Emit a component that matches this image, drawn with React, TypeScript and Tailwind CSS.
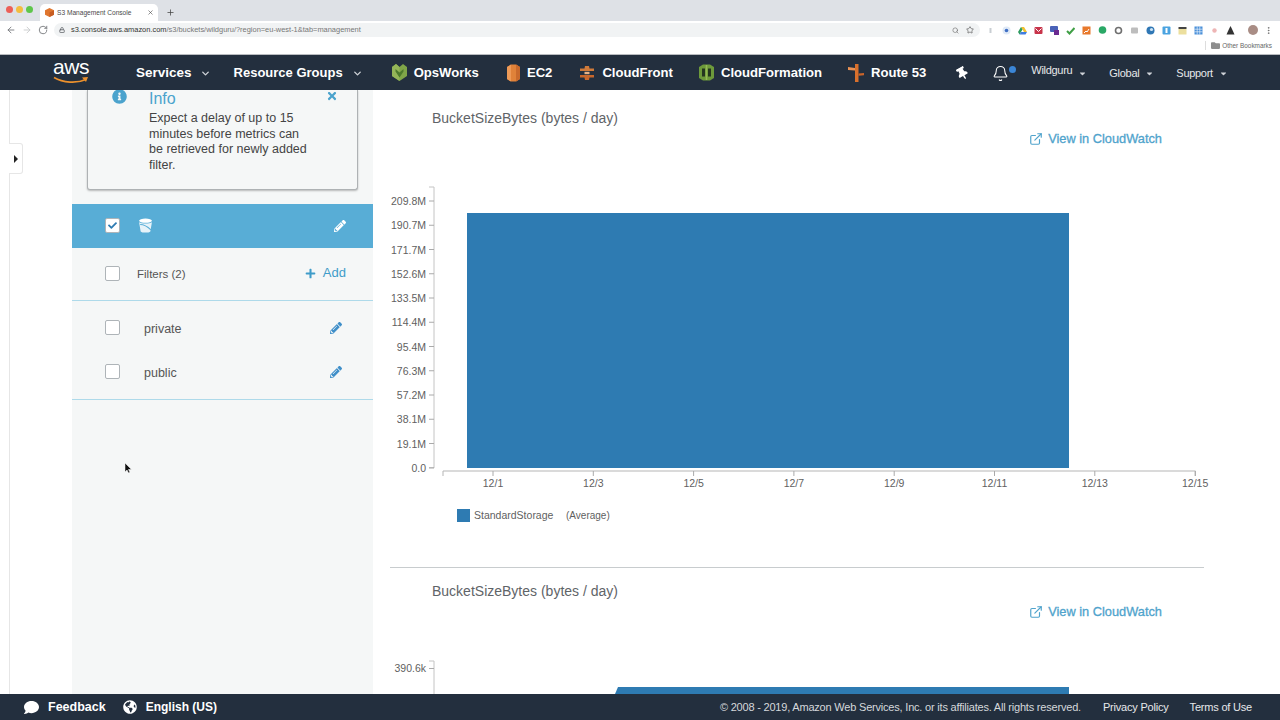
import { ArrowLeft, ArrowRight, ChevronDown, EllipsisVertical, ExternalLink, Lock, Plus, RotateCw, Search, Star, X, Bell } from "lucide-react";
import { FaCaretDown, FaCheck, FaComment, FaGlobeAmericas, FaInfoCircle, FaPencilAlt, FaPlus, FaThumbtack, FaTimes, FaFolder } from "react-icons/fa";

const font = "font-['Liberation_Sans',Arial,sans-serif]";

function Ops() {
  return (
    <svg width="15" height="17" viewBox="0 0 15 17" className="shrink-0">
      <path d="M4 0l3.500 3L11 0l4 3v9l-7.500 5L0 12V3z" fill="#7fa548" />
      <path d="M4 0l3.500 3v14L0 12V3z" fill="#94b558" />
      <path d="M3.500 5l4 3.500 4-3.500v2.500l-4 6-4-6z" fill="#4d7a2c" />
    </svg>
  );
}
function Ec2() {
  return (
    <svg width="15" height="18" viewBox="0 0 15 18" className="shrink-0">
      <path d="M5 .500 1 3v12l4 2.500h5l4-2.500V3L10 .500z" fill="#e08239" />
      <path d="M10 .500 14 3v12l-4 2.500z" fill="#c96a2c" />
      <path d="M5 .500 1 3v12l4 2.500z" fill="#ee9a57" />
    </svg>
  );
}
function Front() {
  return (
    <svg width="16" height="16" viewBox="0 0 16 16" className="shrink-0">
      <path d="M1 3.500h4.500L6 1h4l.5 2.500H15V6H1z" fill="#cf7a3a" />
      <rect x="5.500" y="6.800" width="5" height="2.400" fill="#eab183" />
      <path d="M1 10h14v2.500h-4.500L10 15H6l-.5-2.500H1z" fill="#c8672c" />
    </svg>
  );
}
function Form() {
  return (
    <svg width="15" height="17" viewBox="0 0 15 17" className="shrink-0">
      <path d="M4 .500h7L15 3v11l-4 2.500H4L0 14V3z" fill="#6d9a3b" />
      <path d="M3 4.500h3v8H3zM9 4.500h3v8H9z" fill="#24361f" />
      <rect x="6.700" y="1" width="1.600" height="15" fill="#94bb55" />
    </svg>
  );
}
function Route() {
  return (
    <svg width="16" height="18" viewBox="0 0 16 18" className="shrink-0">
      <path d="M7 0h3.500v18H7z" fill="#d9702c" />
      <path d="M0 3l7 1v2.500L0 6z" fill="#ea9254" />
      <path d="M10.500 9.500 16 9v2.200l-5.500.5z" fill="#c9642a" />
    </svg>
  );
}

function Aws() {
  return (
    <div className="flex w-9 flex-col items-center font-normal">
      <span className="mt-[-4px] h-[17px] text-[21px] leading-[17px] tracking-[-0.5px] text-white">aws</span>
      <svg width="36" height="8" viewBox="0 0 36 8" className="mt-[1px]">
        <path d="M1 1.500C10 7 24 7.500 33 3.500" fill="none" stroke="#ec912d" strokeWidth="1.700" />
        <path d="M29 1.500l6-.5-2 5z" fill="#ec912d" />
      </svg>
    </div>
  );
}

function Bucket() {
  return (
    <svg width="15" height="15" viewBox="0 0 14 14">
      <ellipse cx="7" cy="2.500" rx="6" ry="2" fill="#fff" />
      <path d="M1 4c2 1.500 10 1.500 12 0l-1.500 8.500c-1 1.500-8 1.500-9 0z" fill="#e7f3f9" />
      <path d="M2 6c3 0 7 2 10 5" fill="none" stroke="#58add6" strokeWidth="1" />
    </svg>
  );
}

function Box({ checked = false }: { checked?: boolean }) {
  return (
    <div className="flex h-[15px] w-[15px] shrink-0 items-center justify-center rounded-[2px] border border-[#aeb4b8] bg-white">
      {checked && <FaCheck className="text-[9px] text-[#2e7bb2]" />}
    </div>
  );
}

function Chart1() {
  const ys = ["209.8M", "190.7M", "171.7M", "152.6M", "133.5M", "114.4M", "95.4M", "76.3M", "57.2M", "38.1M", "19.1M", "0.0"];
  const xs = ["12/1", "12/3", "12/5", "12/7", "12/9", "12/11", "12/13", "12/15"];
  return (
    <svg width="907" height="350" viewBox="373 180 907 350" className="block shrink-0">
      <path d="M429 187h5v281h-5" fill="none" stroke="#c4c4c4" strokeWidth="1" />
      {ys.map((t, i) => {
        const y = 201 + i * 24.25;
        return (
          <g key={t}>
            <path d={`M429 ${y}h5`} stroke="#aaa" strokeWidth="1" />
            <text x="426" y={y + 4} textAnchor="end" fontSize="10.500" fill="#5f5f5f">{t}</text>
          </g>
        );
      })}
      <rect x="467" y="213" width="602" height="255" fill="#2e7bb2" />
      <path d="M443 476v-5h752.500v5" fill="none" stroke="#b5b5b5" strokeWidth="1" />
      {xs.map((t, i) => {
        const x = 493 + i * 100.3;
        return (
          <g key={t}>
            <path d={`M${x} 471v5`} stroke="#aaa" strokeWidth="1" />
            <text x={x} y="487" textAnchor="middle" fontSize="10.500" fill="#5f5f5f">{t}</text>
          </g>
        );
      })}
      <rect x="457" y="509" width="13" height="13" fill="#2e7bb2" />
      <text x="474" y="519" fontSize="10.500" fill="#5f5f5f">StandardStorage</text>
      <text x="566" y="519" fontSize="10" fill="#5f5f5f">(Average)</text>
    </svg>
  );
}

function Chart2() {
  return (
    <svg width="907" height="44" viewBox="373 650 907 44" className="block shrink-0">
      <path d="M429 661h5v33" fill="none" stroke="#c4c4c4" strokeWidth="1" />
      <path d="M429 668.500h5" stroke="#aaa" strokeWidth="1" />
      <text x="426" y="672" textAnchor="end" fontSize="10.500" fill="#5f5f5f">390.6k</text>
      <path d="M615 694l3-7h451v7z" fill="#2e7bb2" />
    </svg>
  );
}

function Head({ sep }: { sep?: boolean }) {
  return (
    <>
      <div className={`pl-[59px] text-[14px] leading-5 text-[#5f6468] ${sep ? "pt-[13px]" : "pt-[18px]"}`}>BucketSizeBytes (bytes / day)</div>
      <div className="mt-[1px] flex h-5 items-center justify-end gap-[5px] pr-[118px] text-[#4fa3cc]">
        <ExternalLink size={14} strokeWidth={2} />
        <span className="text-[12.800px] [-webkit-text-stroke:0.3px_#4fa3cc]">View in CloudWatch</span>
      </div>
    </>
  );
}

function Ext({ i }: { i: number }) {
  const shapes = [
    <path key="a" d="M4.500 2v5" stroke="#c9ced3" strokeWidth="2" />,
    <><circle key="b" cx="4.500" cy="4.500" r="4" fill="#dfe9f6" /><circle cx="4.500" cy="4.500" r="1.800" fill="#3f6fc4" /></>,
    <><path d="M3 1h3l3 5H6z" fill="#f1c02f" /><path d="M3 1 0 6l1.500 2.500L4.500 3.500z" fill="#2e9b5f" /><path d="M1.500 8.500h6L9 6H3z" fill="#3f7de0" /></>,
    <><rect x="0.500" y="1" width="8" height="7" rx="1" fill="#c8344a" /><path d="M1.500 2.500l3 3 3-3" fill="none" stroke="#fff" strokeWidth="1" /></>,
    <><rect x="0" y="0" width="8" height="6" rx="1" fill="#4a62b8" /><rect x="4" y="4" width="5" height="5" fill="#6a2a90" /></>,
    <path d="M1 5l2.500 2.500L8.500 2" fill="none" stroke="#3f9f45" strokeWidth="2" />,
    <><rect x="0.500" y="0.500" width="8" height="8" fill="#e8792c" /><path d="M2 7l2-2 1 1 2-3" fill="none" stroke="#fff" strokeWidth="1" /></>,
    <circle cx="4.500" cy="4" r="3.800" fill="#2aa866" />,
    <circle cx="4.500" cy="4.500" r="3" fill="none" stroke="#6f6f6f" strokeWidth="1.600" />,
    <rect x="1" y="1.500" width="7" height="6" rx="1" fill="#bdbdbd" />,
    <><circle cx="4.500" cy="4.500" r="4" fill="#2f77b5" /><circle cx="5.500" cy="3.500" r="1.600" fill="#cfe4f4" /></>,
    <><rect x="0.500" y="0.500" width="8" height="8" rx="1" fill="#4aa3e0" /><rect x="3.500" y="2" width="2" height="5" fill="#fff" /></>,
    <><rect x="0.500" y="1" width="8" height="2" fill="#444" /><rect x="0.500" y="3" width="8" height="5.500" fill="#ecdf9e" /></>,
    <><rect x="0.500" y="0.500" width="8" height="8" fill="#4a90d9" /><path d="M3.200.500v8M5.800.500v8M.500 3.200h8M.500 5.800h8" stroke="#fff" strokeWidth="0.600" /></>,
    <circle cx="4.500" cy="4.500" r="2.200" fill="#eeb5b5" />,
    <path d="M4.500 0l1.500 3 2.500 5.500H.500L3 3z" fill="#333" />,
  ];
  return <svg width="9" height="9" viewBox="0 0 9 9" className="shrink-0">{shapes[i]}</svg>;
}

export default function App() {
  return (
    <div className={`${font} relative flex h-[720px] w-[1280px] flex-col overflow-hidden bg-white`}>
      {/* tab strip */}
      <div className="flex h-[21px] shrink-0 items-end bg-[#dee1e6]">
        <div className="mb-[1px] flex h-[20px] w-10 items-start gap-[3px] pl-[6px] pt-[6px]">
          <span className="h-[7px] w-[7px] rounded-full bg-[#ec5f58]" />
          <span className="h-[7px] w-[7px] rounded-full bg-[#f3bd3f]" />
          <span className="h-[7px] w-[7px] rounded-full bg-[#5ec64a]" />
        </div>
        <div className="flex h-[17px] w-[118px] items-center rounded-t-[5px] bg-white pl-[5px] pr-[4px]">
          <svg width="9" height="9" viewBox="0 0 9 9" className="shrink-0">
            <path d="M4.500 0 9 2.200v4.600L4.500 9 0 6.800V2.200z" fill="#e0762e" />
            <path d="M4.500 4.500 9 2.200v4.600L4.500 9z" fill="#c75d22" />
          </svg>
          <span className="ml-[3px] text-[6.600px] text-[#4a4a4a]">S3 Management Console</span>
          <X size={7} className="ml-auto text-[#444]" strokeWidth={2} />
        </div>
        <div className="flex h-[17px] w-6 items-center justify-center">
          <Plus size={9} className="text-[#444]" strokeWidth={2} />
        </div>
      </div>
      {/* toolbar */}
      <div className="flex h-[18px] shrink-0 items-center bg-white">
        <div className="flex w-[54px] shrink-0 items-center gap-[6px] pl-[6px] text-[#6d7073]">
          <ArrowLeft size={10} strokeWidth={2} />
          <ArrowRight size={10} strokeWidth={2} className="text-[#c4c6c8]" />
          <RotateCw size={10} strokeWidth={2} />
        </div>
        <div className="flex h-[14px] w-[926px] shrink-0 items-center rounded-full bg-[#f1f3f4] pl-[5px] pr-[6px]">
          <Lock size={6} className="text-[#5f6368]" strokeWidth={3} />
          <span className="ml-[6px] text-[7.450px] text-[#777]"><span className="text-[#333]">s3.console.aws.amazon.com</span>/s3/buckets/wildguru/?region=eu-west-1&amp;tab=management</span>
          <Search size={7} className="ml-auto text-[#666]" strokeWidth={2} />
          <Star size={8} className="ml-[7px] text-[#555]" strokeWidth={2} />
        </div>
        <div className="ml-[6px] flex items-center gap-[7px]">
          {Array.from({ length: 16 }, (_, i) => (
            <Ext key={i} i={i} />
          ))}
        </div>
        <span className="ml-[13px] h-[10px] w-[10px] rounded-full bg-[#a98d85]" />
        <EllipsisVertical size={9} className="ml-[6px] text-[#666]" />
      </div>
      {/* bookmarks */}
      <div className="flex h-[16px] shrink-0 items-center justify-end border-b border-[#b9bcc0] bg-white pb-[2px] pr-[8px]">
        <span className="mr-[5px] h-[9px] w-px bg-[#ddd]" />
        <FaFolder className="text-[9px] text-[#8e8e8e]" />
        <span className="ml-[2px] text-[6.400px] text-[#666]">Other Bookmarks</span>
      </div>
      {/* nav */}
      <div className="flex h-[35px] shrink-0 items-center bg-[#232f3e] pt-[1px] text-[13.100px] font-bold text-white">
        <div className="ml-[53px]"><Aws /></div>
        <span className="ml-[47px] text-[13.500px]">Services</span>
        <ChevronDown size={11} strokeWidth={3} className="ml-[8px] text-[#cfd3d8]" />
        <span className="ml-[23px] text-[13px]">Resource Groups</span>
        <ChevronDown size={11} strokeWidth={3} className="ml-[9px] text-[#cfd3d8]" />
        <div className="ml-[29px] flex items-center gap-[7px]"><Ops /><span>OpsWorks</span></div>
        <div className="ml-[27px] flex items-center gap-[6px]"><Ec2 /><span>EC2</span></div>
        <div className="ml-[27px] flex items-center gap-[7px]"><Front /><span>CloudFront</span></div>
        <div className="ml-[26px] flex items-center gap-[7px]"><Form /><span>CloudFormation</span></div>
        <div className="ml-[26px] flex items-center gap-[7px]"><Route /><span>Route 53</span></div>
        <FaThumbtack className="ml-[30px] rotate-[-30deg] text-[13px]" />
        <div className="relative ml-[23px] flex">
          <Bell size={17} strokeWidth={1.500} />
          <span className="absolute left-[17px] top-[1px] h-[7px] w-[7px] rounded-full bg-[#3b86d6]" />
        </div>
        <span className="mb-[5px] ml-[22px] text-[11px] font-normal tracking-[-0.300px] text-[#e6e8ea]">Wildguru</span>
        <FaCaretDown className="ml-[6px] text-[9px] text-[#cfd3d8]" />
        <span className="ml-[22px] text-[11px] font-normal tracking-[-0.300px] text-[#e6e8ea]">Global</span>
        <FaCaretDown className="ml-[6px] text-[9px] text-[#cfd3d8]" />
        <span className="ml-[22px] text-[11px] font-normal tracking-[-0.300px] text-[#e6e8ea]">Support</span>
        <FaCaretDown className="ml-[6px] text-[9px] text-[#cfd3d8]" />
      </div>
      {/* body */}
      <div className="flex min-h-0 flex-1 overflow-hidden">
        {/* rail */}
        <div className="relative w-[72px] shrink-0">
          <div className="ml-[9px] h-full w-px bg-[#e6e6e6]" />
          <div className="absolute left-[9px] top-[53px] flex h-[31px] w-[14px] items-center justify-center rounded-r-[3px] border border-l-0 border-[#e6e6e6] bg-white">
            <span className="h-0 w-0 border-y-[4px] border-l-[4px] border-y-transparent border-l-[#222]" />
          </div>
        </div>
        {/* sidebar */}
        <div className="w-[301px] shrink-0 bg-[#f5f7f7]">
          <div className="mx-[15px] h-[100px] rounded-b-[3px] border border-t-0 border-[#aeb2b4] bg-[#f5f7f7] shadow-[0_1px_2px_rgba(0,0,0,0.25)]">
            <div className="flex">
              <FaInfoCircle className="ml-[24px] mt-[-1px] text-[15px] text-[#4ba3cd]" />
              <div className="ml-[22px] w-[160px]">
                <div className="h-[17px] text-[16px] leading-[17px] text-[#4ba3cd]">Info</div>
                <p className="mt-[4px] text-[12.500px] leading-[15.500px] text-[#444]">Expect a delay of up to 15 minutes before metrics can be retrieved for newly added filter.</p>
              </div>
              <FaTimes className="ml-[17px] mt-[0px] text-[12px] text-[#4ba3cd]" />
            </div>
          </div>
          <div className="mt-[14px] flex h-[44px] items-center bg-[#58add6] pl-[33px] pr-[27px]">
            <div className="mb-[2px]"><Box checked /></div>
            <div className="mb-[2px] ml-[18px]"><Bucket /></div>
            <FaPencilAlt className="mb-[1px] ml-auto text-[12px] text-white" />
          </div>
          <div className="flex h-[53px] items-center border-b border-[#aedaea] pl-[33px] pr-[27px]">
            <div className="mb-[2px]"><Box /></div>
            <span className="ml-[17px] mt-[2px] text-[11.500px] text-[#555]">Filters (2)</span>
            <div className="mb-[2px] ml-auto flex items-center gap-[7px] text-[#3f9cc9]">
              <FaPlus className="text-[11px]" />
              <span className="text-[13px]">Add</span>
            </div>
          </div>
          <div className="h-[99px] border-b border-[#aedaea] pt-[5px]">
            {["private", "public"].map((t) => (
              <div key={t} className="flex h-[44px] items-center pl-[33px] pr-[31px]">
                <div className="mb-[2px]"><Box /></div>
                <span className="ml-[24px] mt-[2px] text-[12.500px] text-[#555]">{t}</span>
                <FaPencilAlt className="ml-auto text-[12px] text-[#3f8fc9]" />
              </div>
            ))}
          </div>
        </div>
        {/* main */}
        <div className="flex min-w-0 flex-1 flex-col overflow-hidden">
          <Head />
          <div className="mt-[31px]"><Chart1 /></div>
          <div className="ml-[17px] mr-[76px] mt-[37px] h-px shrink-0 bg-[#c8ccce]" />
          <Head sep />
          <div className="mt-[28px]"><Chart2 /></div>
        </div>
      </div>
      {/* footer */}
      <div className="flex h-[26px] shrink-0 items-center bg-[#232f3e] text-white">
        <FaComment className="ml-[24px] text-[15px]" />
        <span className="ml-[9px] text-[12.500px] font-bold">Feedback</span>
        <FaGlobeAmericas className="ml-[17px] text-[14px]" />
        <span className="ml-[9px] text-[12px] font-bold">English (US)</span>
        <span className="ml-auto text-[11px] tracking-[-0.200px] text-[#d5d8db]">© 2008 - 2019, Amazon Web Services, Inc. or its affiliates. All rights reserved.</span>
        <span className="ml-[22px] text-[11px] tracking-[-0.200px] text-[#e6e8ea]">Privacy Policy</span>
        <span className="ml-[21px] mr-[28px] text-[11px] tracking-[-0.200px] text-[#e6e8ea]">Terms of Use</span>
      </div>
      {/* cursor */}
      <svg width="7" height="11" viewBox="0 0 7 11" className="absolute left-[125px] top-[463px]">
        <path d="M0 0v9l2-2 1.500 3 1.500-.7L3.500 6.500H6.500z" fill="#111" stroke="#fff" strokeWidth="0.500" />
      </svg>
    </div>
  );
}
